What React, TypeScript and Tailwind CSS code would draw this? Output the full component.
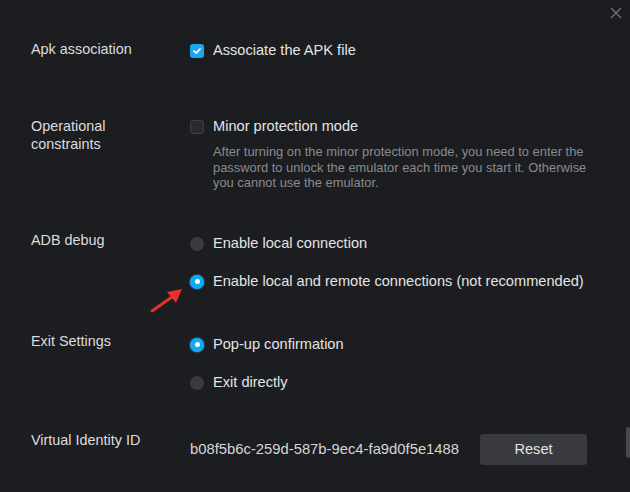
import React from 'react';

const Checkbox = ({ checked }: { checked: boolean }) =>
  checked ? (
    <span className="flex h-[14px] w-[14px] items-center justify-center rounded-[3px] bg-[#1ba6ef]">
      <svg width="10" height="10" viewBox="0 0 10 10">
        <path d="M2 5.2 L4.2 7.2 L8 3" stroke="#fff" strokeWidth="1.8" fill="none" strokeLinecap="round" strokeLinejoin="round" />
      </svg>
    </span>
  ) : (
    <span className="h-[14px] w-[14px] rounded-[3px] border border-[#3f4045] bg-[#2a2b2f]" />
  );

const Radio = ({ checked }: { checked: boolean }) =>
  checked ? (
    <span className="flex h-[14px] w-[14px] items-center justify-center rounded-full bg-[#14a8f2] shadow-[0_0_2px_#2bb8ff]">
      <span className="h-[5px] w-[5px] rounded-full bg-white" />
    </span>
  ) : (
    <span className="h-[14px] w-[14px] rounded-full bg-[#3a3b3f]" />
  );

const Label = ({ children }: { children: React.ReactNode }) => (
  <div className="w-[159px] shrink-0 text-[14.4px] leading-[18px] pt-[1px] text-[#dcdcdc]">{children}</div>
);

const RadioOption = ({ checked, text }: { checked: boolean; text: string }) => (
  <div className="flex h-[28px] items-center gap-[9px]">
    <Radio checked={checked} />
    <span className="text-[14.6px] text-[#e4e4e4]">{text}</span>
  </div>
);

export default function App() {
  return (
    <div
      className="relative h-[492px] w-[630px] overflow-hidden bg-[#1c1d21]"
      style={{ fontFamily: '"Liberation Sans", Arial, sans-serif' }}
    >
      {/* close */}
      <svg className="absolute left-[609px] top-[6px]" width="14" height="14" viewBox="0 0 14 14">
        <path d="M2 2 L12 12 M12 2 L2 12" stroke="#6e6f73" strokeWidth="1.4" />
      </svg>

      <div className="flex flex-col pl-[31px] pt-[39px]">
        {/* Apk association */}
        <div className="flex items-start">
          <Label>Apk association</Label>
          <div className="mt-[1px] flex h-[22px] items-center gap-[9px]">
            <Checkbox checked />
            <span className="text-[14.6px] text-[#e4e4e4]">Associate the APK file</span>
          </div>
        </div>

        {/* Operational constraints */}
        <div className="mt-[54px] flex items-start">
          <Label>
            Operational
            <br />
            constraints
          </Label>
          <div className="flex flex-col">
            <div className="flex h-[22px] items-center gap-[9px]">
              <Checkbox checked={false} />
              <span className="text-[14.6px] text-[#e4e4e4]">Minor protection mode</span>
            </div>
            <p className="ml-[23px] mt-[6px] w-[380px] text-[12.9px] leading-[15.5px] text-[#8a8b8e]">
              After turning on the minor protection mode, you need to enter the password to unlock the emulator each time
              you start it. Otherwise you cannot use the emulator.
            </p>
          </div>
        </div>

        {/* ADB debug */}
        <div className="mt-[39px] flex items-start">
          <Label>ADB debug</Label>
          <div className="flex flex-col gap-[10px]">
            <RadioOption checked={false} text="Enable local connection" />
            <RadioOption checked text="Enable local and remote connections (not recommended)" />
          </div>
        </div>

        {/* Exit Settings */}
        <div className="mt-[35px] flex items-start">
          <Label>Exit Settings</Label>
          <div className="flex flex-col gap-[10px]">
            <RadioOption checked text="Pop-up confirmation" />
            <RadioOption checked={false} text="Exit directly" />
          </div>
        </div>

        {/* Virtual Identity ID */}
        <div className="mt-[33px] flex items-start">
          <Label>Virtual Identity ID</Label>
          <div className="mt-[4px] flex h-[31px] items-center">
            <span className="w-[290px] text-[14.8px] text-[#d6d6d6]">b08f5b6c-259d-587b-9ec4-fa9d0f5e1488</span>
            <button className="h-[31px] w-[107px] rounded-[3px] bg-[#393a3f] pt-[2px] text-[14.6px] text-[#e2e2e2]">Reset</button>
          </div>
        </div>
      </div>

      {/* red annotation arrow */}
      <svg className="absolute left-[148px] top-[284px]" width="40" height="32" viewBox="0 0 40 32">
        <path d="M4 27 L24 13" stroke="#e8302c" strokeWidth="3" strokeLinecap="round" />
        <path d="M34 5 L19 8 L28 19 Z" fill="#e8302c" />
      </svg>

      {/* scrollbar */}
      <div className="absolute left-[626px] top-[427px] h-[31px] w-[4px] rounded-[2px] bg-[#48494e]" />
    </div>
  );
}
